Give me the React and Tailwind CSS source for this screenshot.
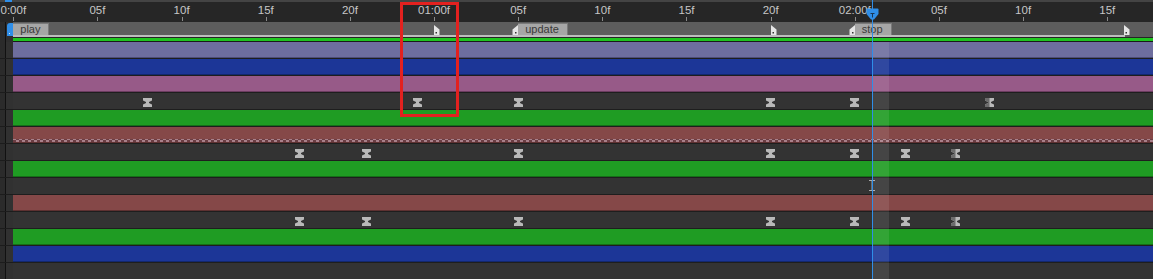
import React from 'react'

// timeline scale: 25fps, 16.83px per frame, frame 0 at x 13.3
const PX = 16.83
const ORIGIN = 13.3
const fx = (f) => ORIGIN + f * PX

const rulerLabels = [
  [0, '0:00f'], [5, '05f'], [10, '10f'], [15, '15f'], [20, '20f'],
  [25, '01:00f'], [30, '05f'], [35, '10f'], [40, '15f'], [45, '20f'],
  [50, '02:00f'], [55, '05f'], [60, '10f'], [65, '15f'],
]

const markers = [
  { label: 'play', start: 0, end: 25 },
  { label: 'update', start: 30, end: 45 },
  { label: 'stop', start: 50, end: 66 },
]

const BAR = {
  purple: ['bg-[#6e6e9e]', 'bg-[#4d4d78]'],
  blue: ['bg-[#1c3697]', 'bg-[#13286e]'],
  magenta: ['bg-[#975a88]', 'bg-[#6b3d60]'],
  green: ['bg-[#1f9c23]', 'bg-[#156f18]'],
  maroon: ['bg-[#854848]', 'bg-[#5d3131]'],
}

const keysA = { keys: [8, 24, 30, 45, 50], half: [58] }
const keysB = { keys: [17, 21, 30, 45, 50, 53], half: [56] }

const rows = [
  { color: 'purple' },
  { color: 'blue' },
  { color: 'magenta' },
  keysA,
  { color: 'green' },
  { color: 'maroon', hatch: true },
  keysB,
  { color: 'green' },
  { ibeam: true },
  { color: 'maroon' },
  keysB,
  { color: 'green' },
  { color: 'blue' },
  {},
]

function Keyframe({ f, half }) {
  return (
    <svg
      className="absolute top-[5px]"
      style={{ left: fx(f) - 13 - 4.5 }}
      width="9"
      height="9"
      viewBox="0 0 9 9"
    >
      <path d="M0 0H9V2.5L6 4V5L9 6.5V9H0V6.5L3 5V4L0 2.5Z" fill="#b9b9b9" />
      {half && <path d="M0 0H4.5V9H0V6.5L3 5V4L0 2.5Z" fill="#6c6c6c" />}
    </svg>
  )
}

function Gutter() {
  return (
    <div className="flex w-[13px] shrink-0">
      <div className="w-[5px] bg-[#2b2b2b]" />
      <div className="w-[1px] bg-[#111]" />
      <div className="w-[7px] bg-[#2e2e2e]" />
    </div>
  )
}

function Row({ row }) {
  const bar = row.color ? BAR[row.color] : null
  return (
    <div className="flex h-[17px] shrink-0">
      <div className="flex flex-col w-[13px] shrink-0">
        <div className="flex h-[16px]">
          <div className="w-[5px] bg-[#2b2b2b]" />
          <div className="w-[1px] bg-[#111]" />
          <div className="w-[7px] bg-[#313131]" />
        </div>
        <div className="h-[1px] bg-[#1c1c1c]" />
      </div>
      <div className="relative flex-1 flex flex-col">
        {bar ? (
          <>
            <div className={`h-[15px] ${bar[0]} flex flex-col justify-end`}>
              {row.hatch && (
                <>
                  <div className="h-[1px] bg-[repeating-linear-gradient(90deg,#a8808a_0px,#a8808a_3px,#6b3d43_3px,#6b3d43_6px)]" />
                  <div className="h-[2px] bg-[repeating-linear-gradient(90deg,#6b3d43_0px,#6b3d43_3px,#a8808a_3px,#a8808a_6px)]" />
                </>
              )}
            </div>
            <div className={`h-[1px] ${bar[1]}`} />
          </>
        ) : (
          <div className="h-[16px] bg-[#333333]" />
        )}
        <div className="h-[1px] bg-[#1e1e1e]" />
        {row.keys && row.keys.map((f) => <Keyframe key={f} f={f} />)}
        {row.half && row.half.map((f) => <Keyframe key={'h' + f} f={f} half />)}
        {row.ibeam && (
          <svg className="absolute top-[2px]" style={{ left: fx(51) - 13 - 3 }} width="6" height="11" viewBox="0 0 6 11">
            <path d="M0 0.5H6M0 10.5H6M3 0.5V10.5" stroke="#a9a9a9" strokeWidth="1" fill="none" />
          </svg>
        )}
      </div>
    </div>
  )
}

export default function App() {
  return (
    <div
      className="relative w-[1153px] h-[279px] overflow-hidden bg-[#333] flex flex-col"
      style={{ fontFamily: '"Liberation Sans", Arial, sans-serif' }}
    >
      {/* Ruler */}
      <div className="h-[2px] shrink-0 bg-[#444]" />
      <div className="relative h-[20px] shrink-0 bg-[#262626]">
        {rulerLabels.map(([f, label]) => (
          <React.Fragment key={f}>
            <span
              className="absolute top-[2px] -translate-x-1/2 text-[11.5px] leading-[13px] text-[#c6c6c6] whitespace-nowrap"
              style={{ left: fx(f) }}
            >
              {label}
            </span>
            <div className="absolute top-[15px] h-[4px] w-[1px] bg-[#8a8a8a]" style={{ left: Math.round(fx(f)) }} />
          </React.Fragment>
        ))}
      </div>

      {/* Markers + work area */}
      <div className="flex h-[20px] shrink-0">
        <Gutter />
        <div className="flex-1 flex flex-col">
          <div className="relative h-[13px] bg-[#5d5d5d]">
            {markers.map((m) => (
              <React.Fragment key={m.label}>
                {m.start > 0 && (
                  <svg className="absolute top-[3px]" style={{ left: fx(m.start) - 13 - 6 }} width="6" height="10" viewBox="0 0 6 10">
                    <path d="M6 0L0.5 4.5V10H6Z" fill="#e6e6e6" />
                    <rect x="3" y="7" width="1.5" height="1.5" fill="#333" />
                  </svg>
                )}
                <div
                  className="absolute top-[1px] h-[12px] bg-[#a6a6a6] border-t border-r border-[#7a7a7a] pl-[7px] pr-[8px] text-[11px] leading-[11px] text-[#3a3a3a]"
                  style={{ left: fx(m.start) - 13 }}
                >
                  {m.label}
                </div>
                <svg className="absolute top-[3px]" style={{ left: fx(m.end) - 13 }} width="6" height="10" viewBox="0 0 6 10">
                  <path d="M0 0L5.5 4.5V10H0Z" fill="#e6e6e6" />
                  <rect x="1.5" y="7" width="1.5" height="1.5" fill="#333" />
                </svg>
              </React.Fragment>
            ))}
          </div>
          <div className="flex h-[2px]">
            <div className="w-[1112px] bg-[#bdbdbd]" />
            <div className="flex-1 bg-[#5d5d5d]" />
          </div>
          <div className="h-[1px] bg-[#252525]" />
          <div className="h-[3px] bg-[#1fc41f]" />
          <div className="h-[1px] bg-[#1a1a1a]" />
        </div>
      </div>

      {/* Layer rows */}
      {rows.map((row, i) => (
        <Row key={i} row={row} />
      ))}

      {/* work area start handle */}
      <div className="absolute left-[5px] top-0 h-[2px] w-[7px] bg-[#2f8ee8]" />
      <svg className="absolute left-[7px] top-[23px]" width="6" height="13" viewBox="0 0 6 13">
        <path d="M6 0H3Q0 0 0 3V13H6Z" fill="#2f8ee8" />
        <rect x="2" y="10" width="1" height="1" fill="#d8e8f8" />
      </svg>

      {/* current frame highlight + playhead */}
      <div className="absolute left-[872px] top-[42px] bottom-0 w-[17px] bg-white/[0.09]" />
      <div className="absolute left-[872px] top-0 bottom-0 w-[1px] bg-[#2f8ee8]" />
      <svg className="absolute left-[866px] top-[8px]" width="13" height="12" viewBox="0 0 13 12">
        <path d="M0.5 1.5Q0.5 0.5 1.5 0.5H11.5Q12.5 0.5 12.5 1.5V6L8 11.5H5L0.5 6Z" fill="#2f8ee8" />
        <path d="M4.5 5.5H8.5M6.5 5.5V9.5" stroke="#1a3654" strokeWidth="1" fill="none" />
      </svg>

      {/* annotation */}
      <div className="absolute left-[400px] top-[2px] w-[59px] h-[115px] border-[3px] border-[#e3211f]" />
    </div>
  )
}
